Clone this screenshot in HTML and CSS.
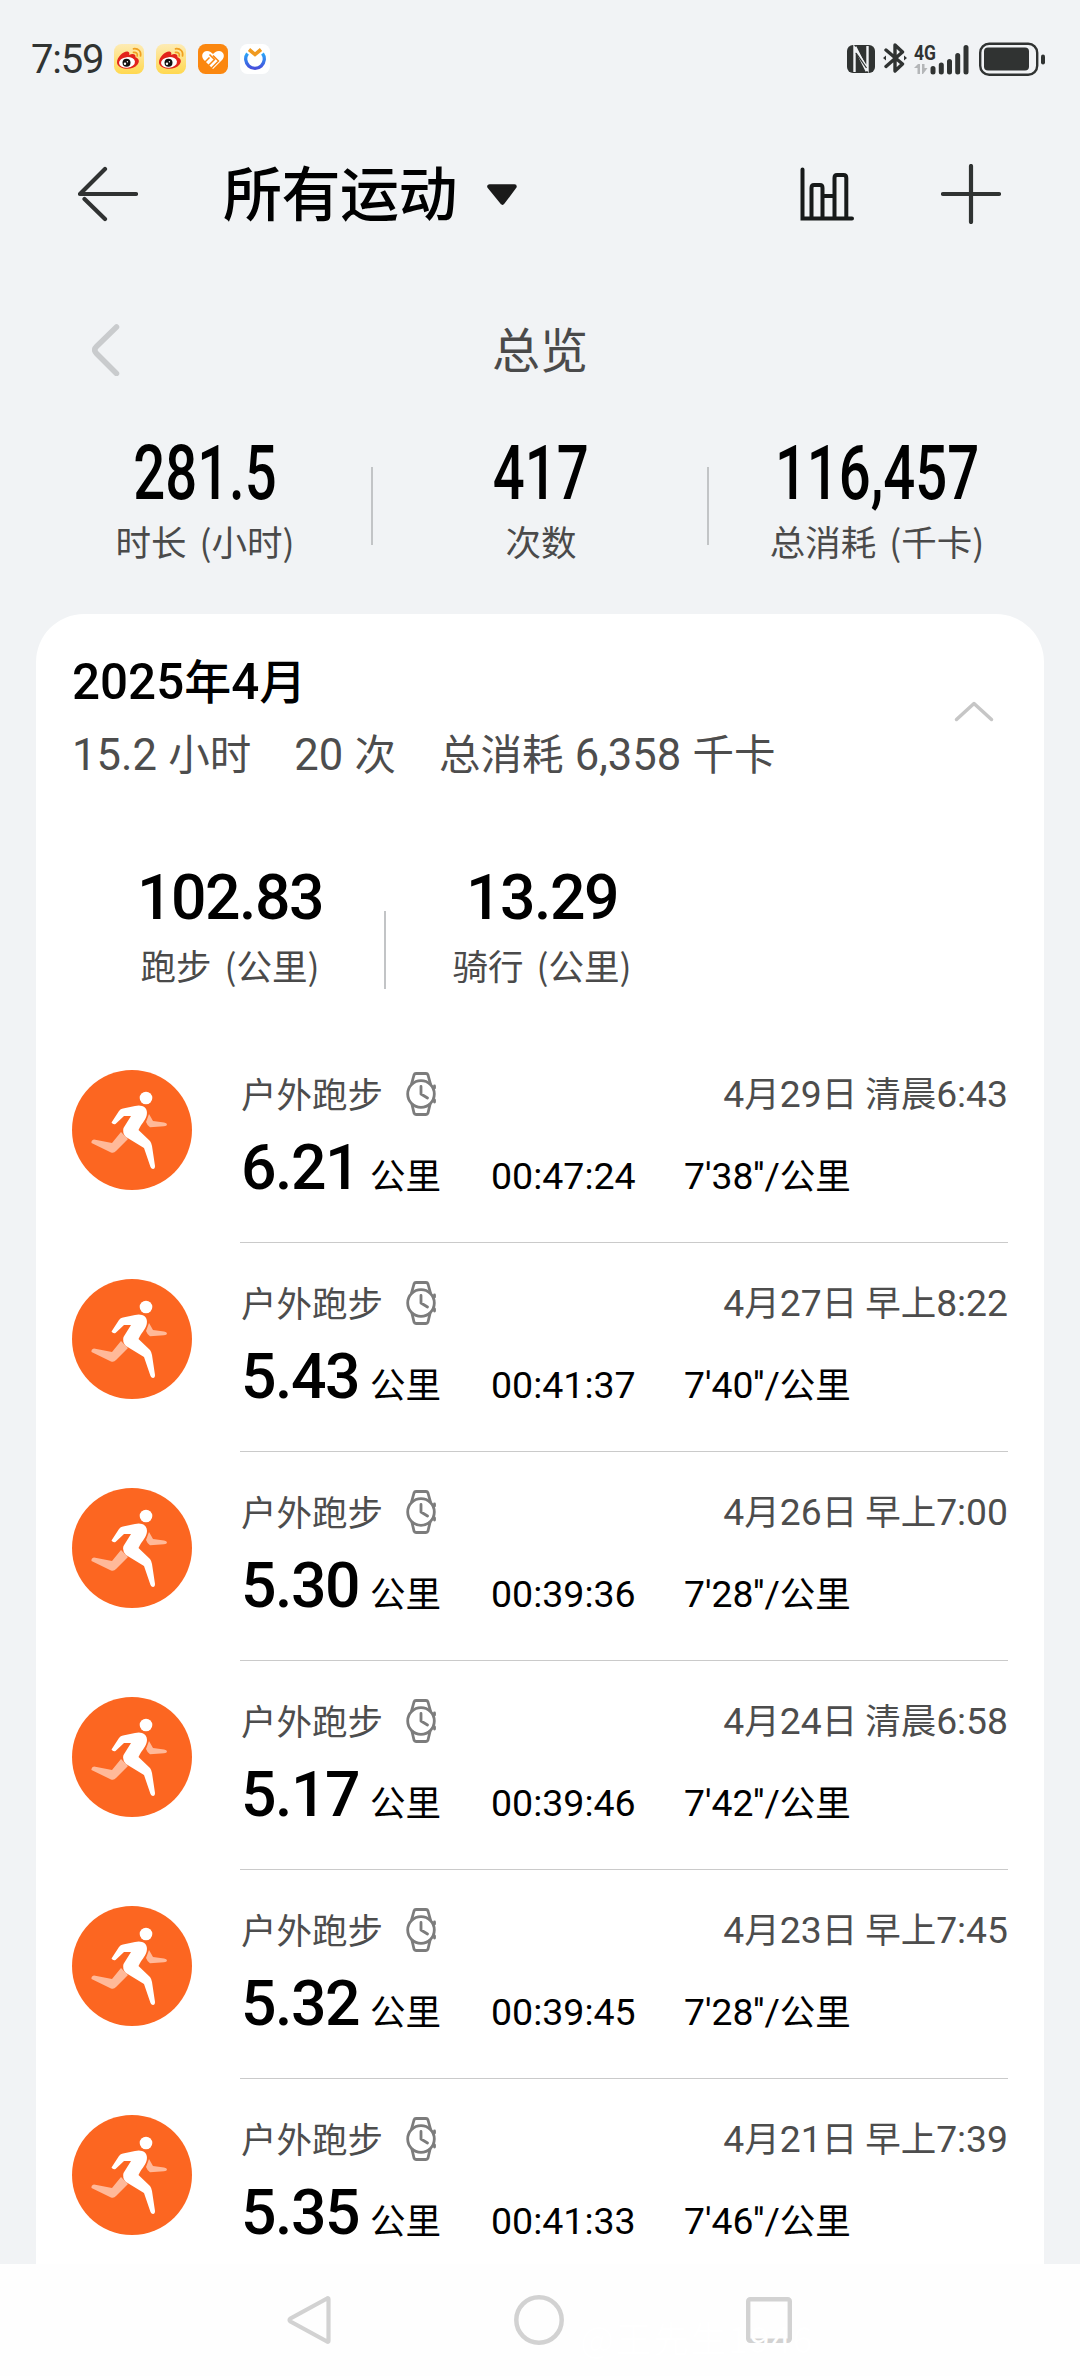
FILE: index.html
```
<!DOCTYPE html>
<html lang="zh-CN">
<head>
<meta charset="utf-8">
<title>所有运动</title>
<link rel="stylesheet" href="styles.css">
</head>
<body>
<svg class="defs" width="0" height="0" aria-hidden="true">
  <symbol id="weibo" viewBox="0 0 30 30">
    <defs><linearGradient id="wbg" x1="0" y1="0" x2="0" y2="1"><stop offset="0" stop-color="#fdebb5"/><stop offset="1" stop-color="#ffd84f"/></linearGradient></defs>
    <rect width="30" height="30" rx="7.5" fill="url(#wbg)"/>
    <path d="M3 18.500C3 13 9.500 7 13.500 7.500C15.500 7.800 15.600 9.500 15.200 11C18 9.500 22 9.500 21.500 13.300C25 14.500 26 17.500 23.500 20.500C20 25 12 26 7 23.500C4.500 22.200 3 20.500 3 18.500Z" fill="#e2231c"/>
    <ellipse cx="13" cy="18.400" rx="8" ry="5.300" fill="#fff" transform="rotate(-6 13 18.400)"/>
    <circle cx="12.500" cy="18.700" r="4" fill="#111"/><circle cx="11" cy="19.800" r="1.200" fill="#fff"/><circle cx="13.400" cy="17.800" r=".7" fill="#fff"/>
    <path d="M19.500 4.800C24.500 4.200 27.500 7.500 26.500 12M19.500 8.400C22.300 8 23.800 9.500 23.200 12" fill="none" stroke="#f0a020" stroke-width="1.700" stroke-linecap="round"/>
  </symbol>
  <symbol id="runner" viewBox="0 0 120 120">
    <circle cx="60" cy="60" r="60" fill="#fc6621"/>
    <path d="M49 62L40 73L22 69.500Q19 70 19.500 73L39 82.500Q42 83.500 44 81L56 69Z" fill="#ffb999"/>
    <path d="M77 44L81 51L92 52.500Q95 53 95 54.500Q95 56 92 56.300L78 57.200Q75 55 74 52Z" fill="#ffb999"/>
    <circle cx="74" cy="28" r="6.300" fill="#fff"/>
    <path d="M70 36C74 37 76 41 74.500 46C73 51 69 54 66.500 60L78 71Q79.500 73 80 76L83 96Q83 99 81 99Q79.500 99 78.500 97L72 78L54 67Q50 63 51.500 58L59 46L52 46L43.500 54Q41 55 39.500 52.500L47 41Q48.500 38.800 51 38.400L63 36Q67 35 70 36Z" fill="#fff"/>
  </symbol>
  <symbol id="watch" viewBox="0 0 30 44">
    <g fill="none" stroke="#7c7c7c" stroke-width="2.800" stroke-linecap="round" stroke-linejoin="round">
      <circle cx="15" cy="22" r="13.300"/>
      <path d="M5.500 12L8 3Q8.500 1.500 10 1.500H20Q21.500 1.500 22 3L24.500 12M6 32.500L8 41Q8.500 42.500 10 42.500H20Q21.500 42.500 22 41L24 32.500M15 14.500V22L21.500 26M28.500 14V16M28.500 28V30"/>
    </g>
  </symbol>
</svg>

<header class="status">
  <div class="status-left">
    <span class="clock">7:59</span>
    <svg class="app"><use href="#weibo"/></svg>
    <svg class="app"><use href="#weibo"/></svg>
    <svg class="app" viewBox="0 0 30 30">
      <rect width="30" height="30" rx="7.500" fill="#fb8710"/>
      <path d="M15 25L5.500 15.500C2.500 11.500 5 7 9 7C12 7 13.500 8.500 15 10C16.500 8.500 18 7 21 7C25 7 27.500 11.500 24.500 15.500Z" fill="#fff"/>
      <path d="M10.500 21.500L16.500 15.500L11.500 10.500M7 18L11.500 13.500M13.500 24L20.500 17L15 11.500" fill="none" stroke="#fb8710" stroke-width="1.500"/>
    </svg>
    <svg class="app" viewBox="0 0 30 30">
      <defs><linearGradient id="ring" x1="0" y1="0" x2="0" y2="1"><stop offset="0" stop-color="#2ba5f7"/><stop offset="1" stop-color="#4650dc"/></linearGradient></defs>
      <rect width="30" height="30" rx="7.500" fill="#fff"/>
      <path d="M7.500 9.500A9.300 9.300 0 1 0 22.500 9.500" fill="none" stroke="url(#ring)" stroke-width="3.300"/>
      <path d="M9 5.500L15 10.500L21 5.500" fill="none" stroke="#f09a20" stroke-width="3.600"/>
    </svg>
  </div>
  <div class="status-right">
    <svg width="28" height="28" viewBox="0 0 28 28">
      <rect width="28" height="28" rx="6" fill="#303332"/>
      <path d="M7.500 27V3L20.500 24V1" fill="none" stroke="#f1f3f5" stroke-width="2.400"/>
      <path d="M8 2L20 26" stroke="#f1f3f5" stroke-width="3"/><path d="M9 8L19.500 23" stroke="#303332" stroke-width="1.300"/>
    </svg>
    <svg width="24" height="30" viewBox="0 0 24 30">
      <path d="M3 7L19.500 21L12 28V2L19.500 9L3 23.500" fill="none" stroke="#303332" stroke-width="3.400" stroke-linejoin="round" stroke-linecap="round"/>
      <path d="M0 15L3 12.500V17.500ZM24 15L21 12.500V17.500Z" fill="#303332"/>
    </svg>
    <svg class="signal" width="56" height="32" viewBox="0 0 56 32">
      <text class="net" x="0" y="17" textLength="22" lengthAdjust="spacingAndGlyphs">4G</text>
      <path d="M0 25L4 21H6V31H3.500V25ZM8 21H10.500V25H13.500L9 31H8Z" fill="#b4b6b8"/>
      <path d="M19 25.500V29M27.300 22V29M35.500 18.500V29M43.700 12.500V29M52 4.500V29" stroke="#303332" stroke-width="5" stroke-linecap="round"/>
    </svg>
    <svg width="67" height="34" viewBox="0 0 67 34">
      <rect x="1.200" y="1.700" width="57" height="31" rx="9" fill="none" stroke="#303332" stroke-width="2.400"/>
      <rect x="5" y="5.500" width="45" height="23" rx="4" fill="#303332"/>
      <rect x="62" y="12.500" width="4" height="10" rx="2" fill="#303332"/>
    </svg>
  </div>
</header>

<nav class="toolbar">
  <svg class="back" width="60" height="56" viewBox="0 0 60 56"><path d="M58 28H2L27 3M6.500 33L27 53" fill="none" stroke="#303232" stroke-width="4.200" stroke-linecap="round" stroke-linejoin="round"/></svg>
  <h1>所有运动</h1>
  <svg class="caret" width="30" height="21" viewBox="0 0 30 21"><path d="M2.500 2.500H27.500L15.500 18.500Z" fill="#1a1a1a" stroke="#1a1a1a" stroke-width="4.500" stroke-linejoin="round"/></svg>
  <svg class="chart" width="54" height="54" viewBox="0 0 54 54"><path d="M2.500 2.500V51.500H52M11.500 50V21Q11.500 18 14 18H20Q22.500 18 22.500 21V50M22.500 29H34.500M34.500 50V11Q34.500 8 37 8H43.500Q46.300 8 46.300 11V50" fill="none" stroke="#171a1a" stroke-width="4" stroke-linecap="round"/></svg>
  <svg width="60" height="60" viewBox="0 0 60 60"><path d="M30 2V58M2 30H58" stroke="#303332" stroke-width="4.200" stroke-linecap="round"/></svg>
</nav>

<section class="period">
  <svg width="28" height="52" viewBox="0 0 28 52"><path d="M24.500 3L4.500 22.500Q1 26 4.500 29.500L24.500 49.500" fill="none" stroke="#c9cbcd" stroke-width="5.500" stroke-linecap="round"/></svg>
  <h2>总览</h2>
</section>

<section class="totals">
  <div class="total"><strong>281.5</strong><span>时长 (小时)</span></div>
  <div class="total"><strong>417</strong><span>次数</span></div>
  <div class="total"><strong>116,457</strong><span>总消耗 (千卡)</span></div>
</section>

<main class="card">
  <div class="month">
    <div>
      <h3><b>2025</b>年<b>4</b>月</h3>
      <p><span><b>15.2</b> 小时</span><span><b>20</b> 次</span><span>总消耗 <b>6,358</b> 千卡</span></p>
    </div>
    <svg width="40" height="21" viewBox="0 0 40 21"><path d="M2.500 18.500L20 2.500L37.500 18.500" fill="none" stroke="#c6c6c6" stroke-width="3.500" stroke-linecap="round" stroke-linejoin="round"/></svg>
  </div>
  <div class="sports">
    <div class="sport"><strong>102.83</strong><span>跑步 (公里)</span></div>
    <div class="sport"><strong>13.29</strong><span>骑行 (公里)</span></div>
  </div>
  <ul class="runs">
    <li><svg class="badge"><use href="#runner"/></svg><div class="run"><div class="line"><span>户外跑步</span><svg class="watch"><use href="#watch"/></svg><time><b>4</b>月<b>29</b>日 清晨<b>6:43</b></time></div><div class="data"><strong>6.21</strong><span class="unit">公里</span><span class="time">00:47:24</span><span><b>7'38''/</b>公里</span></div></div></li>
    <li><svg class="badge"><use href="#runner"/></svg><div class="run"><div class="line"><span>户外跑步</span><svg class="watch"><use href="#watch"/></svg><time><b>4</b>月<b>27</b>日 早上<b>8:22</b></time></div><div class="data"><strong>5.43</strong><span class="unit">公里</span><span class="time">00:41:37</span><span><b>7'40''/</b>公里</span></div></div></li>
    <li><svg class="badge"><use href="#runner"/></svg><div class="run"><div class="line"><span>户外跑步</span><svg class="watch"><use href="#watch"/></svg><time><b>4</b>月<b>26</b>日 早上<b>7:00</b></time></div><div class="data"><strong>5.30</strong><span class="unit">公里</span><span class="time">00:39:36</span><span><b>7'28''/</b>公里</span></div></div></li>
    <li><svg class="badge"><use href="#runner"/></svg><div class="run"><div class="line"><span>户外跑步</span><svg class="watch"><use href="#watch"/></svg><time><b>4</b>月<b>24</b>日 清晨<b>6:58</b></time></div><div class="data"><strong>5.17</strong><span class="unit">公里</span><span class="time">00:39:46</span><span><b>7'42''/</b>公里</span></div></div></li>
    <li><svg class="badge"><use href="#runner"/></svg><div class="run"><div class="line"><span>户外跑步</span><svg class="watch"><use href="#watch"/></svg><time><b>4</b>月<b>23</b>日 早上<b>7:45</b></time></div><div class="data"><strong>5.32</strong><span class="unit">公里</span><span class="time">00:39:45</span><span><b>7'28''/</b>公里</span></div></div></li>
    <li><svg class="badge"><use href="#runner"/></svg><div class="run"><div class="line"><span>户外跑步</span><svg class="watch"><use href="#watch"/></svg><time><b>4</b>月<b>21</b>日 早上<b>7:39</b></time></div><div class="data"><strong>5.35</strong><span class="unit">公里</span><span class="time">00:41:33</span><span><b>7'46''/</b>公里</span></div></div></li>
  </ul>
</main>

<footer class="system-nav">
  <svg width="44" height="50" viewBox="0 0 44 50"><path d="M40 3.500Q41.500 2.500 41.500 4V46Q41.500 47.500 40 46.500L3.500 26.500Q1.500 25 3.500 23.500Z" fill="none" stroke="#d2d2d2" stroke-width="4.200"/></svg>
  <svg width="50" height="50" viewBox="0 0 50 50"><circle cx="25" cy="25" r="22.700" fill="none" stroke="#d2d2d2" stroke-width="4.500"/></svg>
  <svg width="46" height="46" viewBox="0 0 46 46"><rect x="2.200" y="2.200" width="41.600" height="41.600" rx="2" fill="none" stroke="#d2d2d2" stroke-width="4.400"/></svg>
  <span class="watermark">@王先生1946</span>
</footer>
</body>
</html>
```
FILE: styles.css
```
* { box-sizing: border-box; margin: 0; padding: 0; }
body {
  width: 1080px;
  height: 2376px;
  overflow: hidden;
  display: flex;
  flex-direction: column;
  background: #f1f3f5;
  color: #000;
  font-family: "Noto Sans CJK SC", sans-serif;
}
svg { display: block; flex: none; }
.defs { position: absolute; }
h1, h2, h3 { font-weight: 500; }
b {
  font-family: Roboto, sans-serif;
  font-size: 1.05em;
  font-weight: inherit;
  line-height: 1;
}
strong { font-family: Roboto, sans-serif; font-weight: 500; }

/* Status bar */
.status {
  height: 118px;
  padding: 0 34px 0 31px;
  display: flex;
  justify-content: space-between;
}
.status-left { display: flex; gap: 12px; padding-top: 44px; }
.clock {
  width: 71px;
  font: 400 40px/32px Roboto, sans-serif;
  letter-spacing: -1.2px;
  color: #303332;
}
.app { width: 30px; height: 30px; }
.status-right { display: flex; padding-top: 45px; }
.status-right svg:nth-child(2) { margin: -2px 7px 0 8px; }
.status-right .signal { margin: -2px 9px 0 0; overflow: visible; }
.status-right svg:nth-child(4) { margin-top: -3px; }
.net { font: 700 21px Roboto, sans-serif; fill: #303332; }

/* Toolbar */
.toolbar {
  height: 152px;
  padding: 0 79px 0 78px;
  display: flex;
  align-items: center;
}
h1 { margin: -6px 0 0 85px; font-size: 59px; line-height: 80px; letter-spacing: -.5px; }
.caret { margin-left: 30px; }
.chart { margin: 0 87px 0 auto; }

/* Period selector */
.period {
  height: 160px;
  padding: 0 92px;
  display: grid;
  grid-template-columns: 28px 1fr 28px;
  align-items: center;
}
h2 { margin-top: -6px; font-size: 48px; font-weight: 400; text-align: center; color: #4a4a4a; }

/* Totals */
.totals {
  height: 184px;
  margin: 0 36px;
  display: grid;
  grid-template-columns: repeat(3, 1fr);
}
.total, .sport {
  display: flex;
  flex-direction: column;
  align-items: center;
  background: linear-gradient(#c2c4c6, #c2c4c6) right 37px / 2px 78px no-repeat;
}
.totals { position: relative; left: 1px; }
.total:last-child, .sport:last-child { background: none; }
.total strong { font-size: 76px; line-height: 86px; transform: scaleX(.74); }
.total span, .sport span { font-size: 35.500px; line-height: 50px; word-spacing: 5px; color: #4a4a4a; white-space: nowrap; }

/* Month card */
.card {
  flex: 1;
  min-height: 0;
  margin: 0 36px;
  padding: 0 36px;
  overflow: hidden;
  border-radius: 48px 48px 0 0;
  background: #fff;
}
.month {
  height: 238px;
  padding: 35px 14px 0 0;
  display: flex;
  justify-content: space-between;
}
.month svg { margin-top: 52px; }
h3 { font-size: 47px; line-height: 60px; }
.month p { display: flex; gap: 43px; font-size: 41.500px; line-height: 60px; margin-top: 13px; word-spacing: 2px; color: #4d4d4d; }
.sports { height: 182px; padding-left: 2px; display: grid; grid-template-columns: 312px 312px; }
.sport { background-position: right 59px; }
.sport strong { font-size: 62.500px; line-height: 74px; margin-top: 9px; letter-spacing: -1.500px; }
.sport span { margin-top: 5px; }

/* Run list */
.runs { list-style: none; }
.runs li { height: 209px; display: flex; gap: 48px; }
.badge { width: 120px; height: 120px; margin-top: 36px; }
.run { flex: 1; border-bottom: 1px solid #cacaca; }
.line {
  height: 44px;
  margin-top: 38px;
  padding-left: 1px;
  display: flex;
  align-items: center;
  font-size: 35.500px;
  line-height: 40px;
  color: #4d4d4d;
}
.line span, .line time { margin-top: -2px; }
.watch { width: 30px; height: 44px; margin-left: 23px; }
.line time { margin-left: auto; }
.data {
  padding: 16px 0 0 1px;
  display: flex;
  align-items: baseline;
  font-size: 35.500px;
  line-height: 72px;
}
.data strong { width: 129px; font-size: 62.500px; letter-spacing: -1.500px; }
.data .time { width: 193px; margin-left: 50px; font-family: Roboto, sans-serif; font-size: 37.500px; }

/* System navigation */
.system-nav {
  position: relative;
  height: 112px;
  padding: 0 288px 0 287px;
  display: flex;
  justify-content: space-between;
  align-items: center;
  background: #fefefe;
}
.watermark {
  position: absolute;
  left: 580px;
  top: 48px;
  font-size: 36px;
  line-height: 50px;
  letter-spacing: 1.500px;
  white-space: nowrap;
  color: #fff;
}
```
